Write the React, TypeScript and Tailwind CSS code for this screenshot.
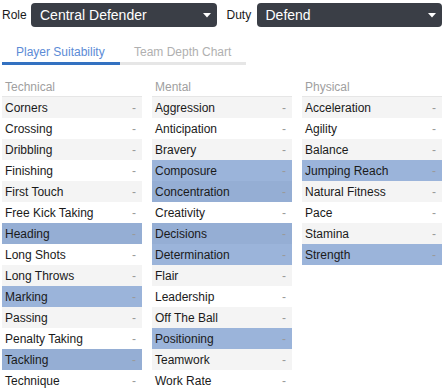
import { useState } from 'react';

type Attr = { name: string; key?: boolean };

const COLUMNS: { title: string; attrs: Attr[] }[] = [
  {
    title: 'Technical',
    attrs: [
      { name: 'Corners' },
      { name: 'Crossing' },
      { name: 'Dribbling' },
      { name: 'Finishing' },
      { name: 'First Touch' },
      { name: 'Free Kick Taking' },
      { name: 'Heading', key: true },
      { name: 'Long Shots' },
      { name: 'Long Throws' },
      { name: 'Marking', key: true },
      { name: 'Passing' },
      { name: 'Penalty Taking' },
      { name: 'Tackling', key: true },
      { name: 'Technique' },
    ],
  },
  {
    title: 'Mental',
    attrs: [
      { name: 'Aggression' },
      { name: 'Anticipation' },
      { name: 'Bravery' },
      { name: 'Composure', key: true },
      { name: 'Concentration', key: true },
      { name: 'Creativity' },
      { name: 'Decisions', key: true },
      { name: 'Determination', key: true },
      { name: 'Flair' },
      { name: 'Leadership' },
      { name: 'Off The Ball' },
      { name: 'Positioning', key: true },
      { name: 'Teamwork' },
      { name: 'Work Rate' },
    ],
  },
  {
    title: 'Physical',
    attrs: [
      { name: 'Acceleration' },
      { name: 'Agility' },
      { name: 'Balance' },
      { name: 'Jumping Reach', key: true },
      { name: 'Natural Fitness' },
      { name: 'Pace' },
      { name: 'Stamina' },
      { name: 'Strength', key: true },
    ],
  },
];

function Select({ value }: { value: string }) {
  return (
    <button className="flex-1 h-[24px] rounded-[4px] bg-[#3a3e46] text-white text-[14px] pl-[9px] pr-[6px] flex items-center justify-between">
      <span>{value}</span>
      <svg width="8" height="5" viewBox="0 0 8 5" className="mt-[1px]">
        <path d="M0 0 L8 0 L4 4.5 Z" fill="#fff" />
      </svg>
    </button>
  );
}

function Row({ attr, index }: { attr: Attr; index: number }) {
  const odd = index % 2 === 0;
  const bg = attr.key ? (odd ? 'bg-[#95aed4]' : 'bg-[#9bb4da]') : odd ? 'bg-[#f4f4f4]' : 'bg-white';
  return (
    <div className={`h-[21px] flex items-center justify-between pl-[3px] pr-[6px] ${bg}`}>
      <span className="text-[#1a1a1a]">{attr.name}</span>
      <span className="text-[#9a9a9a]">-</span>
    </div>
  );
}

export default function App() {
  const [tab, setTab] = useState(0);
  return (
    <div
      className="w-[445px] h-[390px] overflow-hidden bg-white pt-[3px] pl-[2px] pr-[3px] text-[12px]"
      style={{ fontFamily: '"Liberation Sans", Arial, sans-serif' }}
    >
      <div className="flex items-center">
        <span className="text-[#1a1a1a] w-[29px]">Role</span>
        <Select value="Central Defender" />
        <span className="text-[#1a1a1a] ml-[10px] w-[30px]">Duty</span>
        <Select value="Defend" />
      </div>

      <div className="flex mt-[10px]">
        {['Player Suitability', 'Team Depth Chart'].map((t, i) => (
          <button
            key={t}
            onClick={() => setTab(i)}
            className={`h-[28px] pt-[4px] shrink-0 whitespace-nowrap border-b-[3px] flex items-center ${
              tab === i ? 'border-[#3371c1] text-[#5c8bd6]' : 'border-[#e6e6e6] text-[#b0b0b0]'
            } ${i === 0 ? 'w-[118px] pl-[14px]' : 'w-[126px] pl-[14px]'}`}
          >
            {t}
          </button>
        ))}
      </div>

      <div className="flex gap-[10px] mt-[12px]">
        {COLUMNS.map((col) => (
          <div key={col.title} className="w-[140px]">
            <div className="h-[20px] border-b border-[#e6e6e6] pl-[3px] flex items-center text-[#a0a0a0]">
              {col.title}
            </div>
            {col.attrs.map((a, i) => (
              <Row key={a.name} attr={a} index={i} />
            ))}
          </div>
        ))}
      </div>
    </div>
  );
}
